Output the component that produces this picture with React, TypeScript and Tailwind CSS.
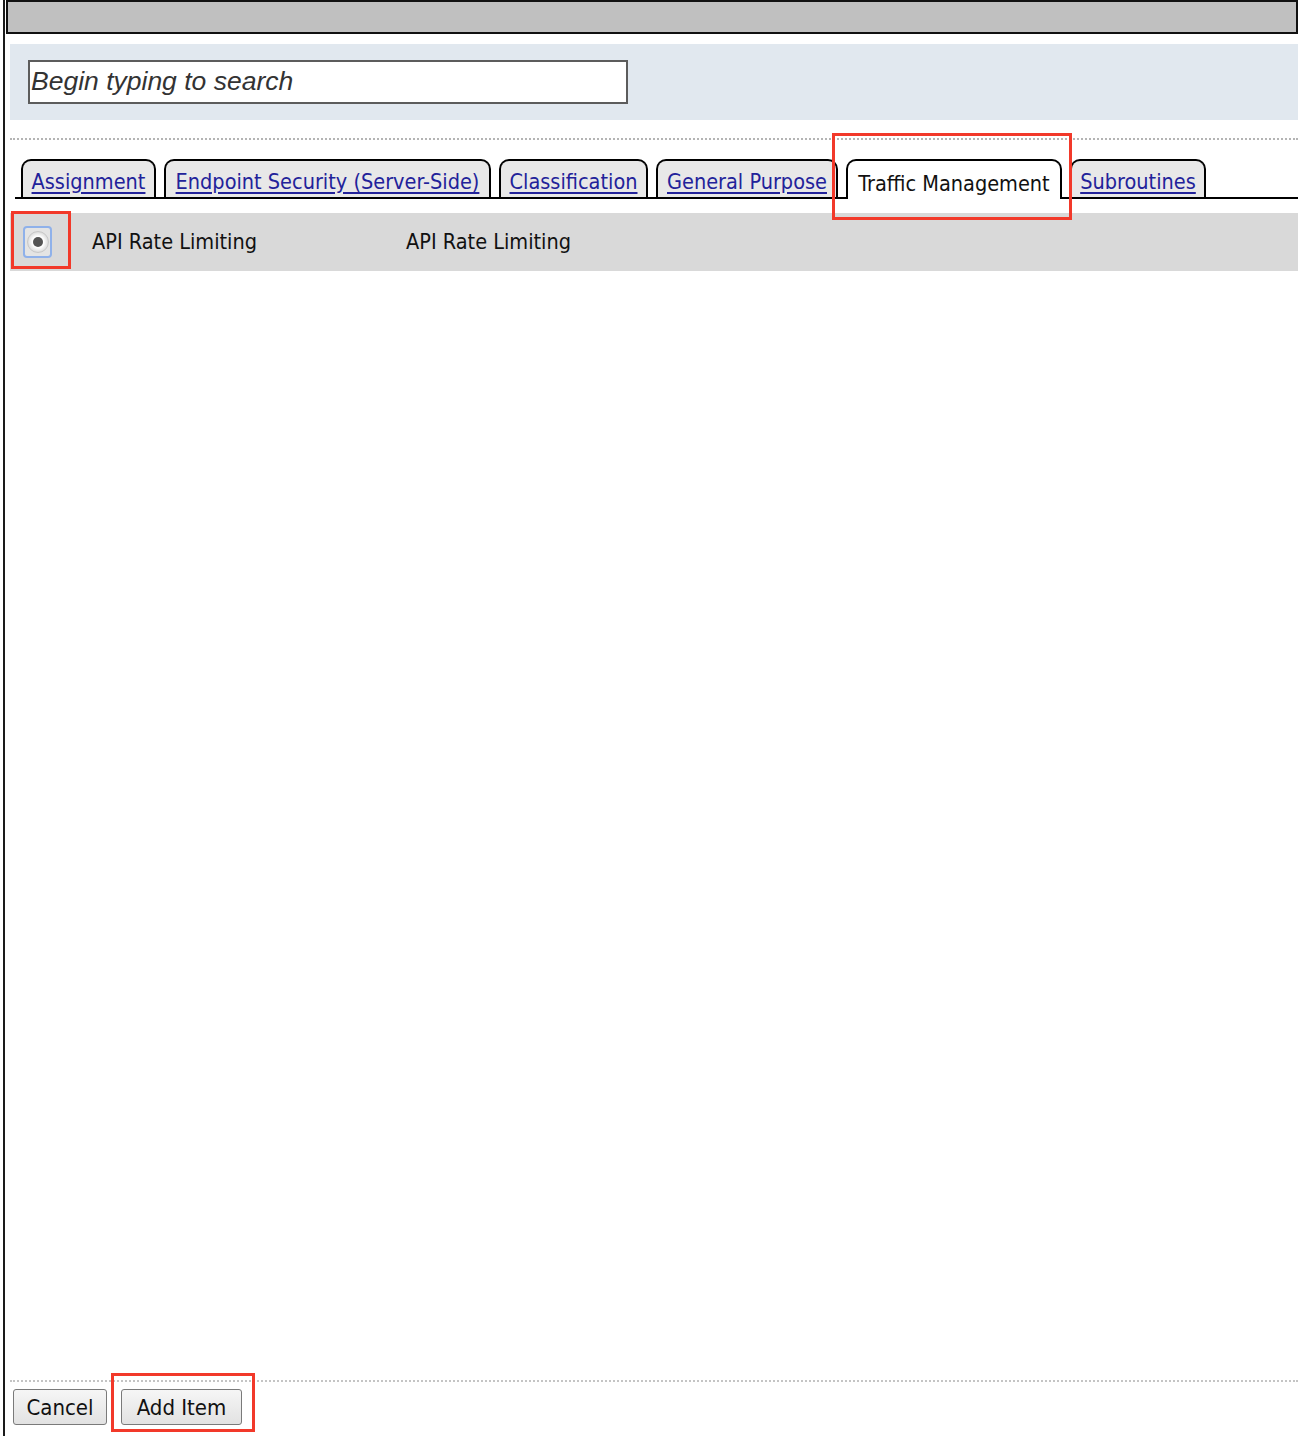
import React from "react";

const tabs = [
  { label: "Assignment", w: "w-[135px]" },
  { label: "Endpoint Security (Server-Side)", w: "w-[327px]" },
  { label: "Classification", w: "w-[149px]" },
  { label: "General Purpose", w: "w-[182px]" },
  { label: "Traffic Management", w: "w-[216px]", active: true },
  { label: "Subroutines", w: "w-[136px]" },
];

// red call-out frame drawn over a control
const Callout = ({ className }: { className: string }) => (
  <div className={`pointer-events-none absolute border-[3px] border-[#f2392a] ${className}`} />
);

const RadioMark = () => (
  <div className="flex h-[32px] w-[29px] items-center justify-center rounded-[4px] border-2 border-[#8fb1ea] bg-[#e4e4e4]">
    <div className="flex h-[22px] w-[22px] items-center justify-center rounded-full border border-[#c8c8c8] bg-[radial-gradient(circle,#ffffff_40%,#bdbdbd_100%)]">
      <div className="h-[10px] w-[10px] rounded-full bg-[#555]" />
    </div>
  </div>
);

export default function App() {
  return (
    <div className="h-[1436px] w-[1298px] overflow-hidden bg-white pl-[3px] font-['DejaVu_Sans_Condensed',sans-serif] text-[#111]">
      <div className="relative flex h-full flex-col border-l-2 border-[#1a1a1a] pl-[1px]">
        {/* title bar */}
        <div className="h-[34px] border-2 border-[#111] bg-[#c0c0c0]" />

        <div className="flex flex-1 flex-col pl-[4px]">
          {/* search strip */}
          <div className="mt-[10px] h-[76px] bg-[#e1e8ef] pl-[18px] pt-[16px]">
            <div className="flex h-[44px] w-[600px] items-center border-2 border-[#5c5c5c] bg-white pl-[1px]">
              <span className="font-['Liberation_Sans',sans-serif] text-[26.5px] italic text-[#333]">
                Begin typing to search
              </span>
            </div>
          </div>

          <div className="mt-[18px] border-t-2 border-dotted border-[#b4b4b4]" />

          {/* category tabs */}
          <div className="ml-[5px] mt-[19px] flex h-[40px] items-end gap-[8px] border-b-2 border-black pl-[6px]">
            {tabs.map((t) =>
              t.active ? (
                <div key={t.label} className={`relative -mb-[2px] h-[40px] ${t.w}`}>
                  <div className="flex h-full items-start justify-center rounded-t-[10px] border-2 border-b-0 border-black bg-white pt-[7px] text-[21.5px] text-[#111]">
                    {t.label}
                  </div>
                  <Callout className="-left-[14px] -right-[10px] -top-[26px] -bottom-[21px]" />
                </div>
              ) : (
                <div
                  key={t.label}
                  className={`flex h-[38px] items-start justify-center rounded-t-[10px] border-2 border-b-0 border-black bg-[#e8e8e8] pt-[5px] text-[21.5px] text-[#22229a] underline underline-offset-[3px] ${t.w}`}
                >
                  {t.label}
                </div>
              )
            )}
          </div>

          {/* result row */}
          <div className="mt-[14px] flex h-[58px] items-center bg-[#d9d9d9] text-[21.5px]">
            <div className="relative ml-[13px]">
              <RadioMark />
              <Callout className="-left-[12px] -right-[19px] -top-[15px] -bottom-[11px]" />
            </div>
            <span className="ml-[40px] w-[314px]">API Rate Limiting</span>
            <span>API Rate Limiting</span>
          </div>

          <div className="flex-1" />

          {/* footer actions */}
          <div className="border-t-2 border-dotted border-[#c4c4c4]" />
          <div className="mb-[11px] mt-[7px] flex gap-[14px] pl-[3px] text-[22px]">
            <button className="h-[36px] w-[94px] rounded-[3px] border border-[#7a7a7a] bg-[linear-gradient(#f6f6f6,#e2e2e2)] text-[#111]">
              Cancel
            </button>
            <div className="relative">
              <button className="h-[36px] w-[121px] rounded-[3px] border border-[#7a7a7a] bg-[linear-gradient(#f6f6f6,#e2e2e2)] text-[#111]">
                Add Item
              </button>
              <Callout className="-left-[10px] -right-[13px] -top-[16px] -bottom-[7px]" />
            </div>
          </div>
        </div>
      </div>
    </div>
  );
}
